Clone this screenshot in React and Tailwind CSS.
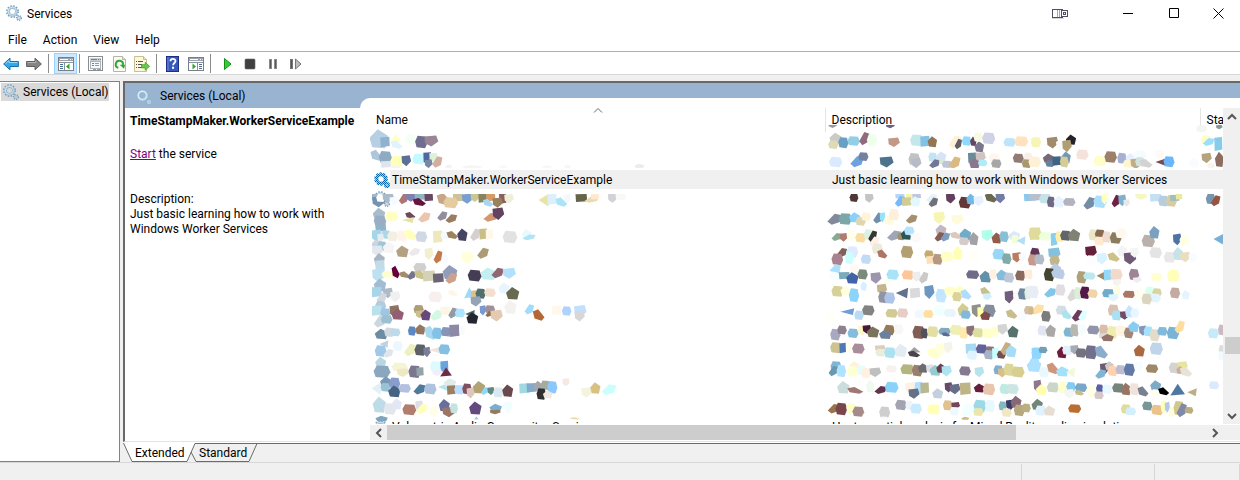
import React from "react";

/* Outlines of the redaction tiles, in a unit box. */
const SHAPES = {
  h: [[0, 0.45], [0.2, 0], [0.85, 0.05], [1, 0.55], [0.8, 1], [0.12, 0.92]],
  p: [[0, 0.45], [0.45, 0], [1, 0.35], [0.85, 1], [0.15, 0.95]],
  q: [[0, 0.1], [0.85, 0], [1, 0.55], [0.5, 1], [0.05, 0.7]],
  r: [[0, 0.7], [0.5, 0], [1, 0.12], [0.85, 0.75], [0.3, 1]],
  f: [[0, 0.2], [0.45, 0], [1, 0.7], [0.75, 1], [0.15, 0.8]],
  s: [[0, 0.05], [0.95, 0], [1, 0.9], [0.05, 1]],
  t: [[0, 1], [0.5, 0], [1, 0.9]],
  l: [[0, 0.5], [1, 0], [0.9, 1]],
};

/* Tiles are grown slightly so that neighbours touch. */
const GROW = 1.1;

/* Each tile: shape, centre x, centre y, width, height, colour (units of a third of a pixel). */
const NAME_TOP = `p 56 56 50 52 b7cfe2;s 75 66 26 28 8fb3cf;t 107 54 30 26 ffffc8;f 110 74 32 24 e0f3ff;h 152 57 30 28 f5fff5;h 184 66 34 34 706e8e;q 214 63 38 30 9a8496;f 49 106 32 30 aec6da;h 76 112 36 34 8fabc4;s 78 133 28 18 dfe5ee;h 111 124 36 30 ffffb5;q 139 122 26 30 5b7097;h 176 117 34 30 c4f9ff;s 202 112 22 28 5266a0;s 220 112 22 24 dff0d8;q 206 131 22 24 7888a6;r 232 126 28 32 d0b09c;p 106 139 30 10 f5f5f5;p 266 139 20 10 f3f3f3;p 336 140 60 8 f5f5f5;p 430 140 26 8 f8f8f8;p 560 140 30 8 f8f8f8;p 622 139 20 10 f6f6f6;p 838 138 28 12 ececec`;
const NAME_MID = `s 50 230 28 20 9fb6cb;q 56 245 36 30 7393b1;h 62 234 24 22 ffffff;q 85 233 32 26 a9bac8;q 104 244 28 26 f7fbff;r 131 236 26 30 ad7672;q 153 232 30 24 8080b0;s 179 230 28 20 8bb6c2;s 206 232 24 22 694765;f 178 246 36 22 66153f;f 252 238 40 34 c6a686;s 294 232 28 24 d0c098;h 272 248 40 30 e4cba0;q 322 236 30 28 779fd2;q 345 233 24 24 c8c890;s 368 234 24 26 848460;s 392 232 26 22 d49b62;f 384 248 28 22 a7d7f3;s 428 236 20 28 895f5b;q 413 248 28 28 98815f;q 447 236 26 26 efeed8;l 552 240 30 36 e8e4a5;s 576 238 26 30 dceffc;f 604 246 32 26 a9e4f9;q 622 236 20 26 f2f8fb;s 664 234 32 22 64644a;r 696 238 40 18 eadab0;s 705 230 22 16 ffe9d0;q 758 234 26 26 d1d1d8;s 782 231 28 18 f8f8f6;
p 57 282 34 34 a8bdca;h 60 303 34 30 99aec4;h 95 289 36 26 ffffbf;f 151 286 28 18 6b485e;l 144 300 32 16 e4e3a4;r 193 292 34 28 ebc5ad;r 247 288 28 26 938e9c;r 274 296 32 24 987d62;r 392 292 40 24 d19872;q 415 281 32 34 624360;
s 62 322 30 24 91b2c9;q 50 347 30 34 a5d6e8;h 78 344 28 24 acd7e9;h 98 349 30 28 f4efe3;q 62 354 18 26 e8ecf0;h 126 348 28 30 fdf2ec;f 152 344 42 30 ffffc0;h 184 350 32 30 d0d8e3;s 233 350 26 34 efe8bf;h 255 346 24 22 f6faff;f 277 345 32 22 9d8360;p 307 344 28 34 454563;r 346 344 28 34 d5d0ce;s 370 342 22 30 c8bf88;s 388 343 20 28 fff8e8;h 450 351 40 34 e2e2e2;p 500 342 26 28 e9faff;r 507 352 36 16 b3e4f6;
p 50 372 28 26 c8d6df;h 66 378 26 26 a4c3d5;q 52 392 32 30 e2e8ee;p 86 382 32 32 f5f5f5;p 58 418 30 34 a9b6c2;p 127 394 34 32 b3a181;r 163 396 32 22 ebe9ea;q 207 402 24 34 f3f0d0;r 234 411 24 36 c47949;p 255 415 18 26 f6faff;q 323 414 34 36 ffffdc;r 369 400 32 30 ac9b73`;
const NAME_LOW = `s 60 -10 26 36 c1dbe8;q 56 16 36 38 bde1f0;h 84 13 36 18 ffffcb;f 107 6 22 34 66003b;f 134 14 30 18 a18c70;r 155 16 24 24 77728f;h 180 -8 36 24 d0d0d0;f 181 14 34 26 c9c28a;s 207 18 34 30 d4d2b6;s 235 24 30 26 6c6376;p 270 7 40 40 929cbb;r 274 25 32 30 cca18d;h 344 17 38 32 453d56;p 385 11 44 34 c4eff1;r 413 9 34 28 906672;q 448 10 36 30 b2e0fd;
p 60 45 34 36 a2bdd2;s 50 66 28 28 a8d5e7;q 84 69 28 28 aebac8;r 65 84 28 28 d6d7de;q 106 80 28 30 f0f0f0;h 226 81 38 30 f8f0ef;f 279 69 28 18 fff6e8;t 328 68 28 30 9cdbff;s 342 75 18 26 dbbf8c;h 362 71 28 28 526e6f;q 348 94 30 28 93a4b8;h 390 68 32 24 f3dfcf;p 432 54 30 30 e7f5ff;p 458 70 36 34 69694f;
h 62 108 30 28 afcce1;s 50 122 28 28 b9e2ec;h 76 128 28 24 a0c5e2;r 60 154 34 34 cbd6df;h 80 148 32 24 9dbfd2;q 104 124 28 34 8f7361;p 113 133 34 30 935e73;h 176 118 28 24 af9d75;q 179 133 22 22 cdc08a;p 197 135 28 30 68497a;r 229 136 34 30 d4f8e3;q 256 123 28 26 fff5e4;r 278 129 24 30 949aa1;h 300 129 28 24 aee4ff;l 330 132 26 22 53655f;p 337 144 32 32 24272f;q 369 121 18 28 7798d1;h 390 118 28 22 a19096;r 387 132 20 16 91704f;q 410 137 34 32 e3cab0;p 451 111 34 38 f4f2f0;r 508 118 26 28 a0dcfc;f 536 135 32 32 b46836;s 590 121 26 26 fff7ea;h 620 123 26 26 aed3ff;q 661 124 34 34 c2dfff;q 659 138 28 30 d7d7d7;
p 64 192 36 28 6c8ca2;h 88 187 28 26 cfd9e1;h 106 187 28 22 bddaea;h 156 183 22 26 5c87c0;p 181 178 28 28 94785f;f 212 188 34 38 a8d9f0;h 231 190 28 32 84c1e7;h 258 185 28 26 8794b8;s 283 182 28 34 8c8aa6;p 306 180 16 26 fafafa;
l 72 222 24 20 c3d1de;h 62 243 32 32 a0c8e9;r 85 250 28 24 e0e5eb;h 113 228 26 28 edf7ff;r 151 240 34 34 edf0bf;h 181 240 32 32 5c6168;q 201 246 20 28 777f99;l 224 240 34 18 f1e4df;h 253 238 32 28 84bfe4;
p 62 278 30 32 b9d6e5;h 66 305 46 34 8ba7bf;h 119 291 44 24 f5f4d4;q 129 308 34 24 efe8c4;h 164 305 34 34 7c768f;s 180 305 20 24 93a5aa;h 227 290 32 30 ddfaff;s 253 289 22 30 6aa4df;q 232 308 28 18 f0effe;t 258 306 32 24 6c2a43;
l 50 355 26 36 e1f1f5;p 78 335 32 28 7899b4;h 104 340 30 32 889dcb;h 76 352 26 24 9ac2d6;p 103 364 34 32 456383;h 134 355 34 24 b4c0df;r 179 358 34 28 4f7a99;h 211 357 34 30 adc3dd;l 249 351 28 20 b5e5ea;p 270 338 34 24 e3ebea;s 274 360 24 26 9a7f60;h 298 359 28 26 b8ddff;h 321 357 26 30 805062;q 332 369 22 30 dec6bd;p 357 352 34 34 b3a371;r 374 363 20 22 8dd8ff;q 393 363 20 22 64887e;h 415 367 28 28 dae8f1;p 443 362 30 34 684a4e;s 493 355 28 28 a0d9e1;s 515 353 28 26 82abcb;p 534 348 24 28 a5a6ac;h 556 346 26 26 a4ac9b;h 577 352 28 34 8ac7ff;h 544 372 26 32 303030;p 563 373 26 22 f0e7e0;q 618 337 20 22 f5e9e2;q 680 367 30 28 f4f3de;p 706 354 28 32 d9c281;r 747 359 40 30 cafffe;
p 58 404 36 44 bedce8;h 90 417 34 32 e3e7ec;p 110 402 28 30 e3e7f4;h 148 419 38 30 b07d6e;q 178 408 22 30 dddfe6;r 186 417 32 28 ffffbb;q 222 425 26 32 ffffe8;p 253 406 30 34 686f9d;q 267 426 36 28 9c7567;h 282 415 22 28 c5e2df;p 346 414 34 36 644a7e;p 407 413 34 22 7dadce;q 406 426 30 12 957959;q 445 412 22 34 effeff;p 65 446 34 16 7ea5be;t 349 444 12 8 a6c4d4;f 645 445 28 6 f0d8ad`;

const DESC_TOP = `q 38 16 24 14 9b9b9b;q 211 17 24 14 696079;
p 47 55 34 30 cacac6;h 40 74 28 24 dedab4;h 70 68 28 30 6ba0c5;h 101 63 34 26 90cfe5;r 133 56 28 36 906b7c;h 156 61 28 34 eeffea;q 222 67 32 26 c19985;h 290 61 36 32 c4e7eb;s 315 64 26 30 82c2e7;p 337 65 26 30 947657;r 405 66 34 36 fff0d7;r 415 72 20 28 606060;h 440 63 26 26 90d9fe;p 460 64 18 26 624662;p 478 80 26 30 7b758e;h 474 52 24 26 fafae2;h 506 55 36 32 d0d3e5;h 569 67 34 24 bce5fc;h 604 64 38 28 ffe3bf;q 648 66 26 26 f5f4b2;
h 47 126 36 28 d9eaff;r 111 125 36 30 6da1df;h 130 110 28 24 7481a1;q 200 126 38 30 4d728b;h 283 118 32 34 c2c2c2;q 289 129 28 28 b6bbc7;h 338 112 24 26 c3e5f1;p 364 109 28 26 d7e4f5;r 344 131 30 24 727795;f 371 127 28 16 d9ead3;h 381 133 28 20 bfc5d5;r 404 128 32 34 dab983;s 457 113 24 28 6d8b95;q 482 112 28 30 d0c4c2;p 464 130 30 28 8a778d;h 488 129 26 18 aeecf6;h 523 114 30 26 fff7ef;h 529 131 28 24 a7a7a7;h 595 115 30 26 917c75;h 624 112 24 26 f8f0e8;h 620 131 26 24 a8986f`;
const DESC_MID = `h 102 233 24 24 4f383a;q 148 234 24 26 c4c4c4;s 240 228 26 14 b5d6f4;r 240 244 28 30 7ab8fc;s 270 231 22 18 f5f2ae;s 260 245 26 24 d1cb94;s 290 228 24 14 bdc6e7;p 286 244 28 28 e1f8fc;r 335 235 30 24 e4f1fa;r 340 247 26 26 717179;q 392 235 26 28 643e5d;h 435 248 34 32 653737;p 452 237 24 30 72b9e8;q 476 243 28 28 e6f1ff;f 513 233 34 26 69694f;q 541 234 26 28 727ca5;s 630 232 34 22 8dc7ea;
r 44 298 40 30 82899a;h 76 297 36 32 7ca7a9;p 104 292 30 28 8ad2fb;h 122 304 28 24 dfd7b2;h 138 290 26 24 fff4d8;r 175 294 28 30 6f8eae;q 188 292 16 28 96e2fc;h 207 301 28 26 fffbdc;h 222 284 28 32 ffeeda;r 275 297 32 24 a5906e;q 358 293 32 34 f6f5b3;q 413 299 34 28 fffadc;
r 50 351 28 22 86aa96;q 71 352 22 24 b17c6d;h 93 346 24 30 ffffe9;h 122 353 30 26 fadca0;h 145 344 24 30 dbf1e3;r 158 349 24 32 383531;r 223 347 40 28 9fa6b6;h 243 350 20 20 a69069;p 259 343 30 30 2f5656;h 268 333 28 24 b5e4ff;q 288 354 30 28 fafafa;r 163 365 28 28 fff0e7;h 172 386 30 30 ecebd8;f 187 402 28 24 ad7563;p 363 330 30 30 c0b9c2;r 358 350 26 26 855d54;r 376 351 26 24 7c9dbe;f 408 346 34 20 dcc8bd;p 436 343 32 32 70abca;h 432 364 28 22 d7cbc9;p 461 356 26 36 a2a2a2;q 502 346 32 32 b0ffea;p 530 354 28 30 955c4c;h 552 350 26 30 89bfd2;p 583 346 32 24 dce8f6;h 585 358 20 24 f2ffd4;l 603 362 24 24 b2dff3;s 645 341 30 34 dedb98;
r 66 398 28 26 806059;h 52 418 32 32 a98290;h 97 396 32 32 dfe9ff;h 88 414 24 34 cafffe;h 138 418 28 26 c2daf3;h 261 396 34 34 b2a074;h 327 403 26 22 c5ab6f;s 330 420 20 22 fce0b8;h 353 418 28 30 b69781;h 381 410 34 28 ffffc5;p 413 398 26 38 ffffb4;h 460 407 30 34 fffff7;h 536 403 34 30 97d7f8;h 560 416 26 30 82aaa9;q 591 412 26 28 bc7d5e;q 608 412 22 22 f8fcff;
r 46 446 30 24 aae1ff;h 44 468 30 24 f6fcff;h 103 447 28 26 fff9f3`;
const DESC_LOW = `l 45 0 30 18 aae1ff;s 73 17 30 20 7caabb;p 97 24 34 32 4263a8;h 128 13 28 28 7a8b7c;q 168 24 30 32 9e95ad;h 218 14 34 28 a8e4f7;h 202 34 24 14 fffff1;h 264 15 34 26 fec598;q 290 20 24 28 ededed;r 311 23 26 32 cacaca;h 458 14 36 24 706b87;p 497 20 34 32 6292a9;h 519 13 22 28 fff0e2;p 545 15 30 30 84bddc;h 567 23 28 28 bfc7d6;h 601 17 28 28 8b6a5e;s 625 13 22 24 ffeddb;
h 53 64 34 30 d7d199;p 79 62 32 28 ffffe0;h 102 76 28 38 8dd3fa;p 131 48 18 26 d8efff;q 186 58 28 30 c6b58c;h 190 82 28 32 9194a2;h 209 84 30 32 adc5e8;l 246 69 34 28 61728d;s 285 69 28 28 dadadd;q 328 66 28 38 6b97c1;h 363 77 30 38 c2e6ff;h 390 63 32 24 ffffc5;p 418 61 30 28 ffffc8;h 411 80 26 26 dcd39b;f 438 73 30 28 b1dbff;f 496 64 28 24 c6c08b;q 502 80 24 20 d0eeff;q 568 81 26 36 705f7c;h 590 78 20 30 fff8f8;h 608 72 26 32 6d87a2;h 624 69 20 36 ddf1da;h 642 66 26 34 e8ecf5;
h 31 138 28 30 fffff7;l 82 125 38 18 6e9dd7;h 117 136 26 26 bbdbf4;h 145 121 34 28 828282;h 215 130 34 24 d3ca93;h 248 129 30 26 e6cdc5;h 299 132 30 24 f2f8ff;h 325 132 28 22 ffdf9e;h 359 121 34 30 f0ffff;h 390 129 34 22 e8f5fa;p 429 119 30 36 d4cc8f;h 437 134 28 24 82b9db;q 470 122 28 36 92908d;s 483 127 20 30 ffffa8;h 508 122 34 34 858f9b;p 496 137 28 24 804b4b;f 575 132 32 26 cabd8d;h 607 136 28 28 f8fcff;h 627 121 28 24 d2bea1;
h 46 194 28 32 a8a9c1;h 66 180 26 24 8c818c;h 99 190 30 26 83bcdc;q 128 182 26 28 fff6c6;q 141 178 24 24 49173c;p 159 186 34 30 79745b;h 208 180 30 28 967b54;p 196 193 34 26 6c7f9b;h 236 178 26 28 f7f7f7;h 296 187 34 36 815f55;h 313 190 20 28 52505c;h 338 185 32 30 e2dfa2;h 374 184 34 20 83aabb;f 378 193 24 12 596b96;h 408 180 34 28 eeefb2;h 431 189 26 32 ffe9ae;q 452 183 24 30 8d7178;h 474 188 30 26 dddd9f;h 503 190 30 28 ffffc8;p 523 184 28 30 ffffcf;q 548 178 28 30 d2d5d3;p 579 185 30 32 59716f;
h 48 233 32 30 ccc391;s 68 234 18 28 4f78b4;h 88 233 18 26 ffffec;h 115 236 34 28 aa8d9a;q 181 236 30 20 dbceba;h 182 248 28 22 e9eddc;h 210 248 32 30 ace1f0;p 242 241 34 36 e3ebf3;t 283 240 34 16 a1a1a1;f 282 252 34 18 4a454a;f 342 250 38 30 ffffcd;h 361 237 30 30 ffffdc;q 385 233 24 32 f5f4eb;s 453 236 30 28 a8d9f3;h 456 256 28 26 dff4ff;h 485 237 32 26 616299;h 511 240 26 20 917277;h 507 254 28 26 a6b3c5;s 526 250 18 30 c8ffff;h 544 254 24 22 714f51;r 557 236 28 36 c7ad81;p 573 243 30 34 a6dcf6;s 649 250 26 32 91d7ff;
h 48 290 30 30 80b6d5;r 40 303 26 28 6a98b0;h 64 303 26 34 b0e3ff;p 103 287 26 26 fff1de;h 98 304 30 30 ffffd4;h 125 301 26 28 e6fcff;h 138 309 26 28 fff0df;q 166 307 32 26 bfbfbf;h 214 297 30 20 f7f1ef;h 262 298 38 28 b4b580;h 292 302 30 32 9a7e6e;p 309 294 28 26 6c6d71;q 330 296 22 24 dedee8;p 346 301 32 30 94cccf;p 363 295 26 26 6a3e4d;q 380 303 28 30 aee3ef;h 435 303 32 26 867a92;q 478 306 26 28 b8e2ec;h 535 300 26 26 7eaed0;q 547 308 24 26 ddbd86;h 567 299 30 34 dcd699;h 594 306 36 30 d7cf92;p 642 286 40 36 abe1ff;
p 70 352 34 34 ccdddd;f 106 361 44 18 a07873;p 150 348 22 36 f0faf0;r 182 360 34 22 623449;h 215 352 38 30 8ad2f9;q 271 355 28 34 fff0e4;s 296 354 22 34 afdeff;s 314 354 24 30 b8b990;q 282 371 30 28 637087;p 353 370 30 28 c5d0df;q 386 352 22 28 684867;q 405 357 30 28 686d88;s 436 356 30 34 bfb486;p 478 354 30 24 651d3c;h 507 358 34 32 e8c5ad;h 554 357 28 28 bdeae3;h 578 357 34 28 cce7e3;
r 42 416 34 26 997349;h 64 417 32 34 7b464b;h 94 415 28 28 ffffc8;h 115 425 32 28 a58c8a;h 194 427 30 32 cecece;h 243 405 32 28 a3a4b2;h 267 406 20 26 f0f4f8;h 288 416 32 28 caebff;h 341 418 36 28 ffffb5;h 383 406 26 28 e1c18d;q 407 407 24 20 744658;h 403 424 26 24 edf9ff;h 444 421 30 34 f0ffff;h 480 408 36 34 9cd9e6;h 475 426 28 22 ebe6ad;h 510 408 28 34 e8f8ff;h 548 408 22 26 84b8c1;q 571 405 24 30 3b3b6a;p 588 396 30 34 876877;h 560 428 28 24 f1e8c3;h 598 421 30 32 b7a97f;h 619 414 24 24 bab080;p 653 403 28 30 708777;p 436 445 22 8 ccb988;h 193 444 22 8 fafafa`;

const SIDE_TOP = `h 515 26 30 18 f4f4f4;q 568 21 18 12 889698;
h 18 67 28 28 f7f5b6;q 68 68 32 32 a28b6d;f 93 77 28 34 fafafa;p 123 59 28 28 222229;q 111 78 26 34 af9e73;h 157 104 34 28 f5e3db;h 14 126 34 30 fff1d5;p 56 115 32 26 74687a;h 60 131 24 18 6780a0;s 80 123 24 26 3f6585;p 108 112 26 32 7197b3;h 103 126 24 30 d6cc95;h 210 123 36 28 fffecb;h 242 111 34 32 9d8069;h 276 115 26 30 a4b1d3;p 301 113 26 26 e7eefd;h 294 131 28 22 fff5d1;h 329 106 36 26 f5fbff;q 318 131 30 30 bfae89;h 330 125 26 26 d1e4df;f 348 130 36 24 d3d3d3;q 388 103 26 28 fffaf5;l 394 126 32 22 784a51;h 417 125 30 30 6cb7fa;h 528 60 28 26 ffffbf;r 536 66 32 22 9edefd;s 565 72 22 38 86cce9;q 530 114 28 28 b6a47e;h 492 129 26 26 f8fcff;h 543 137 22 14 f7f5ed;p 568 118 24 42 8c6d60`;
const SIDE_MID = `s 17 230 38 22 b9becd;h 46 236 34 28 c4e4ea;h 63 246 22 30 706986;p 87 245 30 32 e7f3fe;h 118 246 34 22 b3b3bf;r 178 250 32 34 748ca4;h 210 245 36 34 acdffd;q 224 237 18 30 ffffc2;r 258 243 24 34 702142;q 277 241 22 32 7eb0cf;q 290 249 18 20 e8e8e8;q 334 229 34 18 f7f7c4;s 377 232 32 24 c4e0f2;h 400 243 28 30 b5cddf;h 424 243 30 32 d8cca5;s 434 234 26 18 a5bdb9;s 447 230 18 16 eaea9f;h 542 237 26 30 7696ad;r 557 242 26 30 965543;
h 15 341 36 34 dfdc9b;h 45 349 34 24 edffdc;s 72 358 18 36 89cdef;h 89 350 24 30 ffedaa;h 107 347 30 28 60656a;p 132 345 34 34 818176;h 192 345 30 32 ebe8c9;h 210 343 28 26 896b51;h 208 363 28 24 ffe9d0;h 230 351 24 32 f0dcd0;h 257 354 32 32 897d5d;h 273 340 30 28 fff8ee;h 355 363 36 34 bbb1ac;p 373 337 28 34 7ba0c0;q 442 358 24 32 5173a4;h 464 361 28 28 ffffe4;l 566 357 28 30 78b0d7;
h 15 400 26 30 613557;h 8 420 26 32 c8998a;h 28 418 28 28 b2bcc9;q 73 401 34 34 85c1de;h 74 421 28 28 c1b58e;q 183 396 32 34 642039;h 184 422 28 30 fdfdff;q 216 416 30 32 d8f2ff;f 251 411 34 26 cbc18a;p 277 393 28 32 f3f3f5;q 300 415 34 34 6f5975;q 314 398 24 28 f5f5f5;h 377 398 34 30 e4e4e4;h 419 412 32 30 e8e8e8;p 444 401 28 36 c6e3e9;q 466 411 30 28 e8dfc0;q 488 414 22 26 f8fbff;
p 76 448 32 34 b8cce4;h 90 462 26 28 c4cbe4`;
const SIDE_LOW = `h 58 14 30 36 44452f;p 82 8 34 30 b8cce4;h 0 14 12 28 ffebda;h 155 22 28 34 b0a07a;h 178 18 34 20 bbe8ee;l 214 17 26 26 9e8969;s 233 15 22 30 93d8fb;h 259 14 34 32 f1d9cc;q 261 38 24 20 f4f4f4;h 312 14 28 32 9f8498;q 322 30 24 16 eeeeee;h 380 21 32 22 ffffcf;h 430 17 34 34 ffffb9;
h 6 66 32 34 e8ecf5;r 61 68 34 26 83c6e8;h 91 60 28 32 e2dde0;r 127 76 28 34 dad9d6;h 144 70 22 34 dbeed7;h 165 68 28 34 541748;h 188 71 28 24 efd5a8;h 235 70 34 24 70accb;h 260 62 20 28 fffee2;q 251 83 28 22 e1f4ff;h 297 73 34 20 aa7860;h 328 72 28 26 fffff1;h 359 64 26 26 d8fff0;h 381 68 26 24 dad49f;h 374 84 34 24 e1f4ff;h 350 87 28 30 dbd4bf;h 435 69 28 30 c4aaa1;p 467 74 22 26 e5f4ff;
r 22 118 38 28 ffdfa4;s 3 123 14 18 d1b68a;h 48 139 26 30 7c7c7c;h 94 121 30 26 d3dce7;f 110 134 28 26 a9e4ee;r 143 137 32 32 6b3d5d;r 158 137 24 30 deffff;h 250 121 30 32 dbc1b0;h 260 136 28 28 aae0f1;q 284 136 26 24 724c65;p 298 124 24 34 c4e5fe;h 314 129 24 26 e9f5ff;
h 37 182 26 28 e1e6f2;p 62 182 28 34 aaa9a8;h 94 188 30 28 fffffa;h 117 187 30 26 7db6d0;h 134 181 26 34 b7b8b0;q 156 180 24 34 f8fbff;h 190 180 34 24 9194aa;h 221 179 26 28 dabeab;h 247 187 30 34 eeedac;q 222 199 28 18 dcdcd7;p 233 203 34 20 94736a;h 272 183 30 30 fff4df;h 296 189 26 30 a18779;p 311 170 30 30 8accf0;q 339 182 22 28 8b94b7;h 355 184 26 28 a2e3ff;h 374 196 28 34 e4dcc9;h 397 184 28 24 83b9dc;h 429 189 34 34 78b4d5;r 449 171 28 36 ffdd9e;h 550 190 30 28 c7eafb;h 575 180 20 30 cbbbc1;
h 20 250 28 32 8fd7ff;h 39 240 24 18 719fb5;p 96 247 28 32 6e1c3b;h 112 241 28 26 e3f1fb;q 134 239 24 26 a4adb7;h 153 249 30 26 75727e;h 183 247 34 38 73708e;f 214 246 36 36 8caccd;p 328 242 30 32 aa6941;h 379 236 36 34 c1d5ea;h 576 238 18 24 dddddd;h 574 258 18 26 f0faff;
h 13 284 32 34 abe0ff;h 42 307 28 28 e9f7ff;f 69 295 34 32 d0967c;p 97 304 34 28 a3e1fb;l 122 307 24 28 f1f9d7;q 224 296 26 32 6a5a77;r 212 312 30 26 81b5d5;p 238 287 24 24 d0c9c7;h 248 303 28 28 ffd1ae;h 272 299 28 26 bdbdcf;h 298 299 30 34 6379a8;h 326 288 24 26 f8fcff;h 366 296 34 24 9f8868;h 433 294 30 30 d5d2d1;q 458 289 28 28 e7e3a0;p 450 300 20 22 ceaf95;f 468 305 34 28 e7e3d7;
q 23 348 22 34 90758e;p 34 359 30 30 ffffae;h 69 352 34 28 cbd6c8;h 98 352 26 32 ffffcc;h 123 350 26 26 84caf1;q 118 371 28 26 f4f5f5;h 153 353 34 24 79a7c7;f 148 368 26 16 c7bd88;h 185 364 30 36 ffffe8;h 209 356 20 24 5960a4;h 207 376 26 22 d4c8c9;h 232 358 28 26 e8f8fe;h 265 354 34 26 76857c;p 288 357 28 34 967562;h 313 358 28 34 f1e3dc;f 339 364 30 28 788091;p 377 347 30 30 7daac7;h 378 368 28 18 fffff0;f 401 364 30 22 000000;t 443 359 40 32 5077a3;l 486 367 26 22 bdae84;h 552 346 28 22 dce8ff;
p 21 405 30 28 708777;h 32 422 30 28 e0f2ff;p 58 422 32 28 e7ded3;h 134 416 36 24 b96f32;h 288 417 28 26 e0db9e;h 302 424 30 22 d3eefc;h 352 408 28 24 779698;h 382 420 34 28 eac38a;h 402 410 18 34 ffffb7;q 412 412 14 30 b4c9e9;h 426 427 18 26 fdfddc;h 447 415 30 40 d1c78b;r 455 421 28 38 8189aa;h 477 421 24 18 bdac7d`;

const FIELDS = [
  { x: 360, y: 120, tiles: NAME_TOP, clip: "upper" },
  { x: 820, y: 120, tiles: DESC_TOP, clip: "upper" },
  { x: 1030, y: 120, tiles: SIDE_TOP, clip: "upper" },
  { x: 360, y: 120, tiles: NAME_MID, clip: "lower" },
  { x: 820, y: 120, tiles: DESC_MID, clip: "lower" },
  { x: 1030, y: 120, tiles: SIDE_MID, clip: "lower" },
  { x: 360, y: 270, tiles: NAME_LOW, clip: "lower" },
  { x: 820, y: 270, tiles: DESC_LOW, clip: "lower" },
  { x: 1030, y: 270, tiles: SIDE_LOW, clip: "lower" },
];

function Tile({ spec }) {
  const [shape, cx, cy, w, h, fill] = spec.trim().split(" ");
  const points = SHAPES[shape]
    .map(([px, py]) => `${+cx + (px - 0.5) * w * GROW},${+cy + (py - 0.5) * h * GROW}`)
    .join(" ");
  return <polygon points={points} fill={`#${fill}`} />;
}

function Redaction() {
  return (
    <svg
      className="pointer-events-none absolute top-0 left-0"
      width="870"
      height="316"
      viewBox="370 108 870 316"
      aria-hidden="true"
    >
      <clipPath id="upper"><rect x="370" y="125" width="853" height="43" /></clipPath>
      <clipPath id="lower"><rect x="372" y="194" width="851" height="228" /></clipPath>
      {FIELDS.map((field, i) => (
        <g key={i} clipPath={`url(#${field.clip})`}>
          <g transform={`translate(${field.x} ${field.y}) scale(${1 / 3})`}>
            {field.tiles.split(";").map((spec, k) => <Tile key={k} spec={spec} />)}
          </g>
        </g>
      ))}
    </svg>
  );
}

function Gears({ main = "#9fc3dc", rim = "#7798b0", shine = "#d8eaf4" }) {
  return (
    <svg className="size-4 shrink-0" viewBox="0 0 16 16" fill="none" aria-hidden="true">
      <circle cx="6.5" cy="6.5" r="5.6" stroke={rim} strokeWidth="1.6" strokeDasharray="1.6 1.33" />
      <circle cx="6.5" cy="6.5" r="4.2" stroke={main} strokeWidth="2.2" />
      <circle cx="6.2" cy="6.2" r="4" stroke={shine} strokeWidth="0.9" />
      <circle cx="6.5" cy="6.5" r="3" stroke={rim} strokeWidth="0.5" />
      <circle cx="13" cy="13" r="2.2" stroke={rim} strokeWidth="1.6" strokeDasharray="1.1 0.9" />
      <circle cx="13" cy="13" r="1.4" stroke={main} strokeWidth="1.2" />
    </svg>
  );
}

function CheckedGears() {
  return (
    <svg className="size-4 shrink-0" viewBox="0 0 16 16" fill="none" aria-hidden="true">
      <defs>
        <pattern id="check" width="2" height="2" patternUnits="userSpaceOnUse">
          <rect width="2" height="2" fill="#a3c8e2" />
          <rect width="1" height="1" fill="#0067b0" />
          <rect x="1" y="1" width="1" height="1" fill="#0067b0" />
        </pattern>
      </defs>
      <circle cx="7" cy="7" r="5.8" stroke="url(#check)" strokeWidth="2" strokeDasharray="2.4 1.2" />
      <circle cx="7" cy="7" r="4.2" stroke="url(#check)" strokeWidth="3" />
      <circle cx="13" cy="13" r="1.9" stroke="url(#check)" strokeWidth="2.2" />
    </svg>
  );
}

function Chevron({ d }) {
  return (
    <svg className="size-2.5" viewBox="0 0 10 10" fill="none" stroke="#555" strokeWidth="2" aria-hidden="true">
      <path d={d} />
    </svg>
  );
}

function Tool({ label, className = "w-4", children }) {
  return (
    <button type="button" aria-label={label} className={`flex h-[21px] shrink-0 items-center justify-center ${className}`}>
      <svg width="16" height="16" viewBox="0 0 16 16" className="shrink-0" aria-hidden="true">{children}</svg>
    </button>
  );
}

function Separator({ className }) {
  return <span className={`h-[19px] w-px shrink-0 bg-[#8c8c8c] ${className}`} />;
}

function ConsoleGlyph({ flip }) {
  return (
    <>
      <rect x="0.5" y="1.5" width="15" height="13" fill="#fff" stroke="#7a8089" />
      <rect x="1" y="2" width="14" height="3" fill="#9aa3ae" />
      <path d="M2 3.5h8M12 3.5h1M14 3.5h.6" stroke="#fff" />
      <path d="M1 6.5h14" stroke="#8d939b" />
      <g transform={flip ? "translate(16 0) scale(-1 1)" : undefined}>
        <path d="M6.5 7v7" stroke="#8d939b" />
        <path d="M2 8.5h3M2 10.5h3M2 12.5h3" stroke="#4c6e93" />
        <path d="M11.5 7.5v6L8 10.5z" fill="#2fa52f" />
      </g>
    </>
  );
}

function Toolbar() {
  return (
    <div className="flex h-[23px] items-center border-b border-[#d7d7d7] pt-px pl-[3px]" role="toolbar" aria-label="Standard">
      <Tool label="Back">
        <path d="M.6 8 7 2.2v3.3h8.4v5H7v3.3z" fill="#35a9e8" stroke="#1470b0" />
        <path d="M2.5 7.6 6 4.5v2h8.5" fill="none" stroke="#8fdcff" />
      </Tool>
      <Tool label="Forward" className="ml-[7px] w-4">
        <path d="M15.4 8 9 2.2v3.3H.6v5H9v3.3z" fill="#858585" stroke="#5e5e5e" />
        <path d="M1.5 6.5h8.3V5" fill="none" stroke="#b5b5b5" />
      </Tool>
      <Separator className="ml-1.5" />
      <Tool label="Show or hide console tree" className="ml-[5px] w-[23px] border border-[#99d1ff] bg-[#cce8ff]">
        <ConsoleGlyph />
      </Tool>
      <Separator className="ml-0.5" />
      <Tool label="Properties" className="ml-2 w-4">
        <rect x="0.5" y="0.5" width="14" height="14" fill="#fff" stroke="#8d8d8d" />
        <rect x="2" y="2" width="11" height="3" fill="#c4ccd4" />
        <path d="M3 3.5h6M10 3.5h1M12 3.5h1" stroke="#6f7f90" />
        <rect x="2.5" y="5.5" width="10" height="7" fill="#f4f8fb" stroke="#aab4bd" />
        <path d="M4 7.5h2M4 9.5h2" stroke="#3a92d0" />
        <path d="M7 7.5h4M7 9.5h4" stroke="#999" />
        <path d="M5 13.5h3M9 13.5h4" stroke="#55b6dc" />
      </Tool>
      <Tool label="Refresh" className="ml-2 w-4">
        <path d="M1.5.5h9l3 3v12h-12z" fill="#fbfbf4" stroke="#b5b5a5" />
        <path d="M10.5.5v3h3" fill="#e6e6d6" stroke="#b5b5a5" />
        <path d="M6.3 11.8A3.6 3.6 0 1 1 10.9 9" fill="none" stroke="#35a635" strokeWidth="2" />
        <path d="M7.6 8.8h5.6l-1.2 4z" fill="#35a635" />
      </Tool>
      <Tool label="Export list" className="ml-[6px] w-4">
        <path d="M.5.5h9l3 3v12H.5z" fill="#fdf8dc" stroke="#c8bd94" />
        <path d="M9.5.5v3h3" fill="#eee3b8" stroke="#c8bd94" />
        <path d="M2 5.5h1M2 8.5h1M2 11.5h1M4 5.5h5M4 8.5h4M4 11.5h5" stroke="#555" />
        <path d="M7.5 8.7h3.7V6.3l4.4 4-4.4 4v-2.4H7.5z" fill="#65cc48" stroke="#3b9a2b" strokeWidth=".7" />
      </Tool>
      <Separator className="ml-1.5" />
      <Tool label="Help" className="ml-2 w-4">
        <rect x="1.5" y="0.5" width="12" height="15" fill="#3657c0" stroke="#1c2f83" />
        <path d="M3 1v14" stroke="#6d8ae0" />
        <path d="M5.5 5.2c0-3 5-3 5-.2 0 2-2.4 2-2.4 4.3" fill="none" stroke="#fff" strokeWidth="1.8" />
        <rect x="7" y="10.7" width="2.1" height="2.1" fill="#fff" />
      </Tool>
      <Tool label="Show or hide action pane" className="ml-[7px] w-4"><ConsoleGlyph flip /></Tool>
      <Separator className="ml-1.5" />
      <Tool label="Start service" className="ml-[9px] w-4">
        <path d="M4.5 2.5v11L11 8z" fill="#2fd02f" stroke="#16901b" />
      </Tool>
      <Tool label="Stop service" className="ml-[6px] w-4">
        <rect x="3" y="3" width="10" height="10" rx="1" fill="#404040" stroke="#666" strokeWidth=".6" />
      </Tool>
      <Tool label="Pause service" className="ml-[7px] w-4">
        <rect x="4.5" y="3.5" width="2" height="9" fill="#555" stroke="#8a8a8a" />
        <rect x="9.5" y="3.5" width="2" height="9" fill="#555" stroke="#8a8a8a" />
      </Tool>
      <Tool label="Restart service" className="ml-[7px] w-4">
        <rect x="2.5" y="3.5" width="2" height="9" fill="#555" stroke="#777" />
        <path d="M7.5 3v10L13 8z" fill="#bdbdbd" stroke="#777" />
      </Tool>
    </div>
  );
}

function TitleBar() {
  return (
    <header className="flex h-7 items-start pl-1.5">
      <span className="pt-[5px]"><Gears /></span>
      <h1 className="ml-[5px] flex-1 pt-[7px]">Services</h1>
      <svg className="mt-2 mr-[37px] h-3 w-4" viewBox="0 0 16 12" fill="none" aria-hidden="true">
        <path d="M0 10.5h12" stroke="#d6d6d6" />
        <rect x="0.5" y="1.5" width="10" height="8" fill="#fff" stroke="#4d4f66" />
        <path d="M5.5 2v7M7.5 2v7" stroke="#a5a7b5" />
        <rect x="9.5" y="2.5" width="6" height="6" fill="#fff" stroke="#4d4f66" />
        <rect x="11.5" y="4.5" width="2" height="2" stroke="#4d4f66" />
      </svg>
      <button type="button" aria-label="Minimize" className="flex h-[27px] w-[46px] items-center justify-center">
        <svg width="11" height="11" viewBox="0 0 11 11" stroke="#000"><path d="M0 5.5h10" /></svg>
      </button>
      <button type="button" aria-label="Maximize" className="flex h-[27px] w-[46px] items-center justify-center">
        <svg width="11" height="11" viewBox="0 0 11 11" fill="none" stroke="#000"><path d="M.5.5h9v9h-9z" /></svg>
      </button>
      <button type="button" aria-label="Close" className="flex h-[27px] w-[43px] items-center justify-center">
        <svg width="11" height="11" viewBox="0 0 11 11" stroke="#000"><path d="m.5.5 10 10M10.5.5l-10 10" /></svg>
      </button>
    </header>
  );
}

function ServiceTable() {
  return (
    <table className="h-max w-full table-fixed border-collapse text-left">
      <colgroup>
        <col className="w-[455px]" />
        <col className="w-[375px]" />
        <col />
      </colgroup>
      <thead>
        <tr className="h-6">
          <th scope="col" className="relative p-0 pl-1.5 font-normal">
            Name
            <svg className="absolute top-0 left-[223px] h-1.5 w-2.5" viewBox="0 0 10 6" fill="none" stroke="#666" aria-hidden="true">
              <path d="m1 4.5 4-4 4 4" />
            </svg>
          </th>
          <th scope="col" className="border-l border-[#e5e5e5] p-0 pl-1.5 font-normal">Description</th>
          <th scope="col" className="overflow-hidden border-l border-[#e5e5e5] p-0 pl-1.5 font-normal whitespace-nowrap">Sta</th>
        </tr>
      </thead>
      <tbody>
        <tr className="h-[19px]"><td colSpan={3} /></tr>
        <tr className="h-[19px]"><td colSpan={3} /></tr>
        <tr className="h-[19px]">
          <td className="p-0">
            <div className="flex h-[19px] items-center pl-1">
              <CheckedGears />
              <span className="flex h-full flex-1 items-center bg-[#f0f0f0] pt-0.5 pl-0.5">TimeStampMaker.WorkerServiceExample</span>
            </div>
          </td>
          <td className="bg-[#f0f0f0] p-0 pt-0.5 pl-[7px] whitespace-nowrap">
            Just basic learning how to work with Windows Worker Services
          </td>
          <td className="bg-[#f0f0f0]" />
        </tr>
        <tr className="h-[19px]"><td className="p-0 pl-1"><Gears /></td></tr>
        {Array.from({ length: 11 }, (_, i) => (
          <tr key={i} className="h-[19px]"><td colSpan={3} /></tr>
        ))}
        <tr className="h-[19px]">
          <td className="p-0">
            <div className="flex h-[19px] items-center gap-0.5 pt-0.5 pl-1"><Gears />Volumetric Audio Compositor Service</div>
          </td>
          <td className="p-0 pt-0.5 pl-[7px] whitespace-nowrap">Hosts spatial analysis for Mixed Reality audio simulation.</td>
          <td />
        </tr>
      </tbody>
    </table>
  );
}

function ServiceList() {
  return (
    <div className="flex min-w-0 flex-1 flex-col pb-px">
      <div className="flex min-h-0 flex-1">
        <div className="relative min-w-0 flex-1 overflow-hidden">
          <ServiceTable />
          <Redaction />
        </div>
        <div className="flex w-[17px] flex-col items-center bg-[#f0f0f0]">
          <button type="button" aria-label="Scroll up" className="flex h-[17px] w-full items-center justify-center">
            <Chevron d="m1 7 4-4 4 4" />
          </button>
          <div className="flex w-full flex-1 flex-col items-end">
            <span className="flex-[212]" />
            <span className="h-[17px] w-[15px] bg-[#cdcdcd]" />
            <span className="flex-[53]" />
          </div>
          <button type="button" aria-label="Scroll down" className="flex h-[17px] w-full items-center justify-center">
            <Chevron d="m1 3 4 4 4-4" />
          </button>
        </div>
      </div>
      <div className="flex h-4 shrink-0 items-stretch border-t border-white bg-[#f0f0f0] pr-[17px]">
        <button type="button" aria-label="Scroll left" className="flex w-[17px] items-center justify-center">
          <Chevron d="M7 1 3 5l4 4" />
        </button>
        <div className="flex flex-1">
          <span className="flex-[629] bg-[#cdcdcd]" />
          <span className="flex-[190]" />
        </div>
        <button type="button" aria-label="Scroll right" className="flex w-[17px] items-center justify-center">
          <Chevron d="m3 1 4 4-4 4" />
        </button>
      </div>
    </div>
  );
}

function ViewTabs() {
  return (
    <div className="relative flex h-5 shrink-0 bg-[#f0f0f0]" role="tablist">
      <svg className="absolute inset-0 h-full w-full" fill="none" stroke="#6b6b6b" aria-hidden="true">
        <path d="M0 0H2000V1H72L64 19.500H9z" fill="#fff" stroke="none" />
        <path d="M72 1.500H2000" />
        <path d="M.5 1 9 19.500H64L72 1.500M68 10l5 9.500H126L134 1.500" />
      </svg>
      <button type="button" role="tab" aria-selected="true" className="relative w-[60px] pt-0.5 pl-3 text-left">Extended</button>
      <button type="button" role="tab" aria-selected="false" className="relative pt-0.5 pl-4">Standard</button>
    </div>
  );
}

export default function App() {
  return (
    <div className="flex h-screen flex-col overflow-hidden bg-white font-[Roboto,'Open_Sans',sans-serif] text-[12px] leading-[15px] text-black">
      <TitleBar />
      <nav className="flex h-6 items-center gap-4 border-b border-[#b0b0b0] pt-0.5 pl-2" aria-label="Main menu">
        <button type="button">File</button>
        <button type="button">Action</button>
        <button type="button">View</button>
        <button type="button">Help</button>
      </nav>
      <Toolbar />
      <main className="flex min-h-0 flex-1 gap-[3px] bg-[#f0f0f0] pt-1.5">
        <aside className="w-[120px] shrink-0 border border-l-0 border-[#828282] bg-white pt-px pl-px">
          <button type="button" className="flex h-[18px] w-[108px] items-center gap-1 bg-[#d9d9d9] pl-0.5 whitespace-nowrap">
            <Gears />
            Services (Local)
          </button>
        </aside>
        <section className="flex min-w-0 flex-1 flex-col">
          <div className="flex min-h-0 flex-1 flex-col border-t-2 border-b border-l-2 border-t-[#696969] border-b-[#e3e3e3] border-l-[#696969] bg-white">
            <div className="flex h-[25px] shrink-0 bg-[#99b4d1]">
              <h2 className="flex w-[235px] shrink-0 items-center gap-2 pt-0.5 pl-[11px]">
                <Gears main="#b9dcee" rim="#8fb3cc" shine="#e3f4fb" />
                Services (Local)
              </h2>
              <div className="mt-auto h-2.5 flex-1 rounded-tl-[10px] bg-white" />
            </div>
            <div className="flex min-h-0 flex-1">
              <div className="w-[245px] shrink-0 pt-1.5 pl-[5px]">
                <h3 className="font-bold whitespace-nowrap">TimeStampMaker.WorkerServiceExample</h3>
                <p className="mt-[18px]"><a href="#start" className="text-[#800080] underline">Start</a> the service</p>
                <p className="mt-[30px]">Description:</p>
                <p className="w-[210px]">Just basic learning how to work with Windows Worker Services</p>
              </div>
              <ServiceList />
            </div>
          </div>
          <ViewTabs />
        </section>
      </main>
      <footer className="flex h-[18px] shrink-0 justify-end border-t border-[#d7d7d7] bg-[#f0f0f0] pt-px">
        <span className="w-[133px] border-l border-[#d7d7d7]" />
        <span className="w-[86px] border-x border-[#d7d7d7]" />
      </footer>
    </div>
  );
}
